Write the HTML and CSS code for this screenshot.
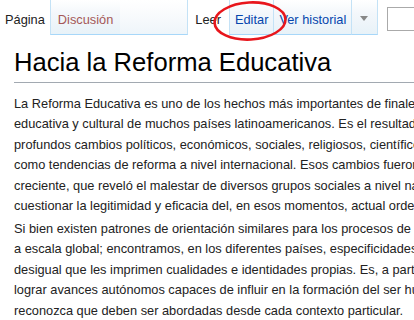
FILE: index.html
```html
<!DOCTYPE html>
<html lang="es">
<head>
  <meta charset="UTF-8">
  <title>Hacia la Reforma Educativa</title>
  <link rel="stylesheet" href="styles.css">
</head>
<body>
  <div class="page">
    <div class="head">
      <div class="tabs">
        <div class="tab selected">Página</div>
        <div class="tab new">Discusión</div>
      </div>
      <div class="filler"></div>
      <div class="tabs views">
        <div class="tab selected">Leer</div>
        <div class="tab">Editar</div>
        <div class="tab">Ver historial</div>
        <div class="tab more"><span class="arrow"></span></div>
      </div>
      <div class="search"><div class="search-box"></div></div>
    </div>

    <div class="content">
      <h1 class="title">Hacia la Reforma Educativa</h1>
      <p>La Reforma Educativa es uno de los hechos más importantes de finales del siglo XX en la historia<br>
      educativa y cultural de muchos países latinoamericanos. Es el resultado de una serie de<br>
      profundos cambios políticos, económicos, sociales, religiosos, científicos y tecnológicos, así<br>
      como tendencias de reforma a nivel internacional. Esos cambios fueron acompañados de una crisis<br>
      creciente, que reveló el malestar de diversos grupos sociales a nivel nacional y que llevó a<br>
      cuestionar la legitimidad y eficacia del, en esos momentos, actual orden educativo.</p>
      <p>Si bien existen patrones de orientación similares para los procesos de reforma educativa<br>
      a escala global; encontramos, en los diferentes países, especificidades y un desarrollo<br>
      desigual que les imprimen cualidades e identidades propias. Es, a partir de ello, que se busca<br>
      lograr avances autónomos capaces de influir en la formación del ser humano, de modo que se<br>
      reconozca que deben ser abordadas desde cada contexto particular.</p>
    </div>

    <svg class="mark" width="80" height="44" viewBox="0 0 80 44">
      <ellipse cx="39" cy="21" rx="35.5" ry="18.5" fill="none" stroke="#e8161c" stroke-width="2.6" transform="rotate(-3 39 21)"/>
    </svg>
  </div>
</body>
</html>
```

FILE: styles.css
```css
body {
  margin: 0;
  overflow: hidden;
  background: #fff;
  font-family: "Liberation Sans", Arial, sans-serif;
  color: #222;
}

.page {
  position: relative;
  width: 600px;
}

.head {
  display: flex;
  height: 35px;
}

.tabs {
  display: flex;
}

.tab {
  display: flex;
  align-items: flex-end;
  padding: 0 7px 7px;
  font-size: 12.8px;
  color: #0645ad;
  background: linear-gradient(to bottom, #fff 0%, #f3f7fb 40%, #e8f2f8 100%);
  border-bottom: 1px solid #a7d7f9;
  border-left: 1px solid #c4e2f6;
  white-space: nowrap;
}

.tab.selected {
  background: #fff;
  color: #222;
  border-bottom-color: #fff;
}

.tabs .tab:first-child {
  border-left: none;
}

.head > .tabs:first-child .tab.selected {
  padding: 0 5px 7px 5px;
}

.tab.new {
  color: #a55858;
}

.views .tab {
  padding: 0 5px 7px;
}

.views .tab.selected {
  padding: 0 8px 7px 7px;
}

.views .tab.more {
  width: 9px;
  padding: 0 8px 13px;
  border-right: 1px solid #c4e2f6;
}

.arrow {
  width: 0;
  height: 0;
  border-left: 4.5px solid transparent;
  border-right: 4.5px solid transparent;
  border-top: 5px solid #888;
}

.filler {
  width: 67px;
  background: linear-gradient(to bottom, #fff 0%, #f6f9fc 60%, #eef5fa 100%);
  border-bottom: 1px solid #a7d7f9;
  border-right: 1px solid #c4e2f6;
}

.search {
  padding: 7px 0 0 9px;
  border-bottom: 1px solid #fff;
}

.search-box {
  width: 160px;
  height: 22px;
  border: 1px solid #aaa;
  background: #fff;
}

.content {
  padding: 12px 0 0 14px;
}

.title {
  margin: 0;
  padding-bottom: 4px;
  font-family: "Liberation Sans", Arial, sans-serif;
  font-weight: normal;
  font-size: 25.6px;
  line-height: 1.2;
  color: #000;
  border-bottom: 1px solid #a2a9b1;
}

.content p {
  margin: 11px 0 0;
  font-size: 12.8px;
  line-height: 20.5px;
  white-space: nowrap;
}

.content p + p {
  margin-top: 2px;
}

.mark {
  position: absolute;
  left: 211px;
  top: 0;
}
```
